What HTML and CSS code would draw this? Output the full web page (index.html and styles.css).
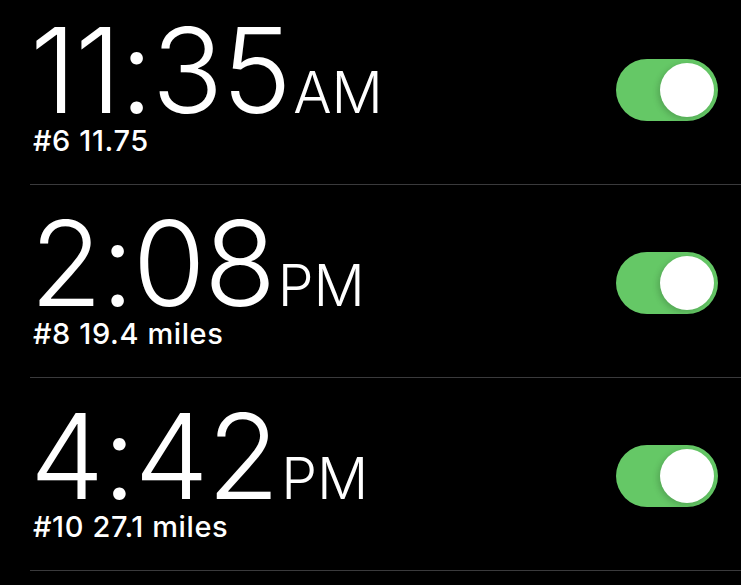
FILE: index.html
```html
<!DOCTYPE html>
<html lang="en">
<head>
    <meta charset="UTF-8">
    <meta name="viewport" content="width=device-width, initial-scale=1.0">
    <title>Alarms</title>
    <link rel="stylesheet" href="styles.css">
</head>
<body>
    <ul class="alarm-list">
        <li class="alarm">
            <div class="alarm-text">
                <div class="alarm-time">11:35<span class="alarm-period">AM</span></div>
                <div class="alarm-label">#6 11.75</div>
            </div>
            <span class="toggle is-on"><span class="toggle-knob"></span></span>
        </li>
        <li class="alarm">
            <div class="alarm-text">
                <div class="alarm-time">2:08<span class="alarm-period">PM</span></div>
                <div class="alarm-label">#8 19.4 miles</div>
            </div>
            <span class="toggle is-on"><span class="toggle-knob"></span></span>
        </li>
        <li class="alarm">
            <div class="alarm-text">
                <div class="alarm-time">4:42<span class="alarm-period">PM</span></div>
                <div class="alarm-label">#10 27.1 miles</div>
            </div>
            <span class="toggle is-on"><span class="toggle-knob"></span></span>
        </li>
    </ul>
</body>
</html>
```

FILE: styles.css
```css
body {
    margin: 0;
    padding: 0;
    background: #000;
    color: #fff;
    font-family: Inter, "Noto Sans", sans-serif;
    overflow: hidden;
}

.alarm-list {
    list-style: none;
    margin: -8px 0 0 30px;
    padding: 0;
}

.alarm {
    display: flex;
    align-items: flex-start;
    justify-content: space-between;
    height: 141px;
    padding: 23px 23px 28px 0;
    border-bottom: 1px solid #3a3a3c;
}

.alarm-time {
    font-size: 118px;
    font-weight: 300;
    line-height: 110px;
    letter-spacing: -1.5px;
}

.alarm-period {
    font-size: 57px;
    line-height: 1;
    letter-spacing: 0;
    margin-left: 3px;
}

.alarm-label {
    margin-left: 3px;
    font-size: 29px;
    font-weight: 500;
    line-height: 31px;
    letter-spacing: 0.6px;
}

/* iOS style switch */
.toggle {
    position: relative;
    width: 102px;
    height: 62px;
    margin-top: 44px;
    border-radius: 31px;
    background: #e5e5ea;
}

.toggle.is-on {
    background: #65c866;
}

.toggle-knob {
    position: absolute;
    top: 4px;
    right: 4px;
    width: 54px;
    height: 54px;
    border-radius: 50%;
    background: #fff;
    box-shadow: -2px 2px 6px rgba(0, 0, 0, 0.18);
}
```
